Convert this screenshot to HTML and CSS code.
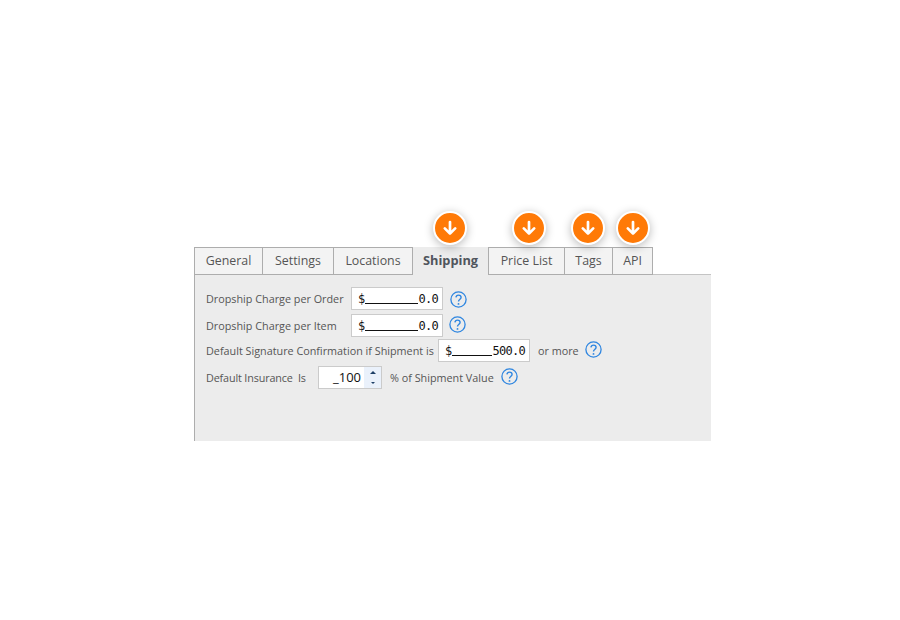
FILE: index.html
```html
<!DOCTYPE html>
<html lang="en">
<head>
  <meta charset="UTF-8" />
  <title>Shipping Settings</title>
  <link rel="stylesheet" href="styles.css">
</head>
<body>

  <svg class="icon-defs" width="0" height="0">
    <symbol id="arrow-down" viewBox="0 0 16 16">
      <path d="M8 2V13.4M2.8 8.4L8 13.6l5.2-5.2" fill="none" stroke="#fff" stroke-width="2.7" stroke-linecap="round" stroke-linejoin="round"/>
    </symbol>
    <symbol id="help" viewBox="0 0 17 17">
      <circle cx="8.5" cy="8.5" r="7.6" fill="none" stroke="#2f86e0" stroke-width="1.3"/>
      <path d="M5.9 6.4c.2-1.5 1.2-2.3 2.6-2.3 1.5 0 2.6.9 2.6 2.2 0 1.1-.6 1.6-1.4 2.2-.8.6-1.2 1-1.2 2" fill="none" stroke="#2f86e0" stroke-width="1.4"/>
      <circle cx="8.5" cy="12.9" r=".95" fill="#2f86e0"/>
    </symbol>
  </svg>

  <div class="settings-panel">
    <div class="tabs">
      <div class="tab tab-general">General</div>
      <div class="tab tab-settings">Settings</div>
      <div class="tab tab-locations">Locations</div>
      <div class="tab tab-shipping active">Shipping
        <span class="badge"><svg width="16" height="16"><use href="#arrow-down"/></svg></span>
      </div>
      <div class="tab tab-prices">Price List
        <span class="badge"><svg width="16" height="16"><use href="#arrow-down"/></svg></span>
      </div>
      <div class="tab tab-tags">Tags
        <span class="badge"><svg width="16" height="16"><use href="#arrow-down"/></svg></span>
      </div>
      <div class="tab tab-api">API
        <span class="badge"><svg width="16" height="16"><use href="#arrow-down"/></svg></span>
      </div>
    </div>

    <div class="tab-body">
      <div class="row row-order">
        <span class="label label-charge">Dropship Charge per Order</span>
        <div class="field"><span>$</span><span class="fill"></span><span>0.0</span></div>
        <svg class="help help-order" width="17" height="17"><use href="#help"/></svg>
      </div>
      <div class="row row-item">
        <span class="label label-charge">Dropship Charge per Item</span>
        <div class="field"><span>$</span><span class="fill"></span><span>0.0</span></div>
        <svg class="help help-item" width="17" height="17"><use href="#help"/></svg>
      </div>
      <div class="row row-signature">
        <span class="label label-signature">Default Signature Confirmation if Shipment is</span>
        <div class="field"><span>$</span><span class="fill"></span><span>500.0</span></div>
        <span class="label after">or more</span>
        <svg class="help help-more" width="17" height="17"><use href="#help"/></svg>
      </div>
      <div class="row row-insurance">
        <span class="label label-insurance">Default Insurance&nbsp; Is</span>
        <div class="spinner">
          <div class="spinner-value">_100</div>
          <div class="spinner-btns">
            <span class="spin-up"></span>
            <span class="spin-down"></span>
          </div>
        </div>
        <span class="label after-pct">% of Shipment Value</span>
        <svg class="help help-pct" width="17" height="17"><use href="#help"/></svg>
      </div>
    </div>
  </div>

</body>
</html>
```

FILE: styles.css
```css
body {
  margin: 0;
  background: #fff;
  font-family: "Open Sans", "Noto Sans", sans-serif;
  color: #555;
}

.icon-defs {
  display: block;
}

.settings-panel {
  width: 517px;
  margin: 247px 0 0 194px;
}

.tabs {
  display: flex;
  height: 28px;
  box-sizing: border-box;
}

.tab {
  position: relative;
  box-sizing: border-box;
  height: 28px;
  padding-bottom: 2px;
  display: flex;
  align-items: center;
  justify-content: center;
  background: #f3f3f3;
  border: 1px solid #adadad;
  border-left: none;
  font-size: 12.4px;
  color: #555;
}

.tab:first-child {
  border-left: 1px solid #adadad;
}

.tab.active {
  z-index: 2;
  background: #ececec;
  border-top: none;
  border-bottom: none;
  border-right: none;
  font-weight: 700;
  font-size: 12.8px;
  color: #50555c;
}

.tab-general { width: 69px; }
.tab-settings { width: 71px; }
.tab-locations { width: 79px; }
.tab-shipping { width: 75px; }
.tab-prices { width: 77px; border-left: 1px solid #adadad; }
.tab-tags { width: 48px; }
.tab-api { width: 40px; }

.badge {
  position: absolute;
  top: -37px;
  width: 34px;
  height: 34px;
  box-sizing: border-box;
  display: flex;
  align-items: center;
  justify-content: center;
  background: #ff7a07;
  border: 2px solid #fff;
  border-radius: 50%;
  box-shadow: 0 2px 10px rgba(0, 0, 0, 0.28);
}

.tab-shipping .badge { top: -36px; left: 20px; }
.tab-prices .badge { left: 23px; }
.tab-tags .badge { left: 6px; }
.tab-api .badge { left: 3px; }

.tab-body {
  height: 167px;
  box-sizing: border-box;
  padding: 12px 0 0 11px;
  background: #ececec;
  border-left: 1px solid #adadad;
  border-top: 1px solid #c4c4c4;
  margin-top: -1px;
}

.row {
  display: flex;
  align-items: center;
  height: 23px;
}

.row-order { margin-bottom: 4px; }
.row-item { margin-bottom: 2px; }
.row-signature { margin-bottom: 4px; }

.label {
  font-size: 10.8px;
  color: #555;
  white-space: nowrap;
}

.label-charge { width: 145px; }
.label-signature { width: 232px; }
.label-insurance { width: 112px; letter-spacing: -0.15px; }

.after { margin-left: 8px; }
.after-pct { margin-left: 8px; }

.field {
  box-sizing: border-box;
  display: flex;
  align-items: center;
  width: 92px;
  height: 23px;
  padding: 0 4px 0 6px;
  background: #fff;
  border: 1px solid #cbcbcb;
  font-family: "DejaVu Sans Mono", monospace;
  font-size: 12px;
  letter-spacing: -0.7px;
  color: #111;
}

.fill {
  flex: 1;
  align-self: flex-end;
  height: 1px;
  margin-bottom: 5px;
  background: #111;
}

.help {
  margin-left: 7px;
  margin-bottom: 2px;
  flex: none;
}

.help-order { margin-bottom: 0; margin-top: 2px; }
.help-item { margin-left: 6px; }
.help-more { margin-left: 6px; }
.help-pct { margin-left: 7px; }

.spinner {
  box-sizing: border-box;
  display: flex;
  width: 64px;
  height: 23px;
  background: #fff;
  border: 1px solid #cbcbcb;
}

.spinner-value {
  flex: 1;
  text-align: right;
  padding-right: 3px;
  line-height: 21px;
  font-size: 13px;
  color: #111;
}

.spinner-btns {
  width: 17px;
  display: flex;
  flex-direction: column;
  background: #eaf1fb;
}

.spin-up,
.spin-down {
  flex: 1;
  display: flex;
  align-items: center;
  justify-content: center;
}

.spin-up::before {
  content: "";
  border-left: 3px solid transparent;
  border-right: 3px solid transparent;
  border-bottom: 3px solid #1d3f66;
}

.spin-down::before {
  content: "";
  border-left: 2px solid transparent;
  border-right: 2px solid transparent;
  border-top: 2px solid #1d3f66;
}
```
